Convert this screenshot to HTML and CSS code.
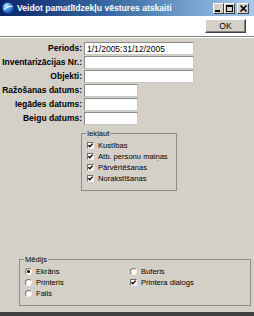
FILE: index.html
```html
<!DOCTYPE html>
<html lang="lv">
<head>
    <meta charset="UTF-8">
    <title>Veidot pamatlīdzekļu vēstures atskaiti</title>
    <link rel="stylesheet" href="styles.css">
</head>
<body>
    <div class="window">
        <!-- Title bar -->
        <div class="titlebar">
            <svg class="app-icon" width="12" height="12" viewBox="0 0 12 12">
                <defs>
                    <radialGradient id="globe" cx="0.35" cy="0.3" r="0.8">
                        <stop offset="0" stop-color="#cfe6ff"/>
                        <stop offset="0.5" stop-color="#3f8ee0"/>
                        <stop offset="1" stop-color="#0b3f9a"/>
                    </radialGradient>
                </defs>
                <circle cx="6" cy="6" r="5.5" fill="url(#globe)"/>
                <path d="M2 8 C4 5, 7 4, 10.5 4.5" stroke="#e8f4ff" stroke-width="1.2" fill="none"/>
            </svg>
            <span class="title">Veidot pamatlīdzekļu vēstures atskaiti</span>
            <div class="win-buttons">
                <span class="win-btn">
                    <svg width="9" height="9" viewBox="0 0 9 9"><rect x="1" y="6" width="5" height="2" fill="#000"/></svg>
                </span>
                <span class="win-btn">
                    <svg width="9" height="9" viewBox="0 0 9 9"><rect x="1.5" y="1.5" width="6" height="6" fill="none" stroke="#000"/><rect x="1" y="1" width="7" height="2" fill="#000"/></svg>
                </span>
                <span class="win-btn close">
                    <svg width="9" height="9" viewBox="0 0 9 9"><path d="M1.5 1.5 L7.5 7.5 M7.5 1.5 L1.5 7.5" stroke="#000" stroke-width="1.6"/></svg>
                </span>
            </div>
        </div>

        <!-- Toolbar -->
        <div class="toolbar">
            <button class="ok-button">OK</button>
        </div>

        <div class="content">
            <div class="fields">
                <label for="period">Periods:</label>
                <input type="text" id="period" class="long" value="1/1/2005:31/12/2005">

                <label for="inv_nr">Inventarizācijas Nr.:</label>
                <input type="text" id="inv_nr" class="long">

                <label for="objects">Objekti:</label>
                <input type="text" id="objects" class="long">

                <label for="made">Ražošanas datums:</label>
                <input type="text" id="made" class="short">

                <label for="bought">Iegādes datums:</label>
                <input type="text" id="bought" class="short">

                <label for="end">Beigu datums:</label>
                <input type="text" id="end" class="short">
            </div>

            <fieldset class="group include">
                <legend>Iekļaut</legend>
                <div class="option"><span class="check on"><svg width="5" height="5" viewBox="0 0 5 5"><path d="M0.3 2.2 L1.8 3.8 L4.7 0.6" stroke="#000" stroke-width="1.3" fill="none"/></svg></span>Kustības</div>
                <div class="option"><span class="check on"><svg width="5" height="5" viewBox="0 0 5 5"><path d="M0.3 2.2 L1.8 3.8 L4.7 0.6" stroke="#000" stroke-width="1.3" fill="none"/></svg></span>Atb. personu maiņas</div>
                <div class="option"><span class="check on"><svg width="5" height="5" viewBox="0 0 5 5"><path d="M0.3 2.2 L1.8 3.8 L4.7 0.6" stroke="#000" stroke-width="1.3" fill="none"/></svg></span>Pārvērtēšanas</div>
                <div class="option"><span class="check on"><svg width="5" height="5" viewBox="0 0 5 5"><path d="M0.3 2.2 L1.8 3.8 L4.7 0.6" stroke="#000" stroke-width="1.3" fill="none"/></svg></span>Norakstīšanas</div>
            </fieldset>

            <fieldset class="group media">
                <legend>Mēdijs</legend>
                <div class="option"><span class="radio on"></span>Ekrāns</div>
                <div class="option"><span class="radio"></span>Buferis</div>
                <div class="option"><span class="radio"></span>Printeris</div>
                <div class="option"><span class="check on"><svg width="5" height="5" viewBox="0 0 5 5"><path d="M0.3 2.2 L1.8 3.8 L4.7 0.6" stroke="#000" stroke-width="1.3" fill="none"/></svg></span>Printera dialogs</div>
                <div class="option"><span class="radio"></span>Fails</div>
            </fieldset>
        </div>
    </div>
</body>
</html>
```

FILE: styles.css
```css
body, html {
    margin: 0;
    padding: 0;
    background-color: #d4d0c8;
    font-family: "Liberation Sans", Arial, sans-serif;
}
.window {
    width: 254px;
    height: 316px;
    box-sizing: border-box;
    background-color: #d4d0c8;
    border-bottom: 4px solid #404040;
    display: flex;
    flex-direction: column;
    overflow: hidden;
}
.titlebar {
    height: 16px;
    flex: none;
    display: flex;
    align-items: center;
    padding: 0 5px 0 2px;
    background: linear-gradient(to right, #0a246a, #3a6ea5 45%, #a6caf0);
}
.app-icon {
    flex: none;
}
.title {
    margin-left: 3px;
    color: #fff;
    font-weight: bold;
    font-size: 8.6px;
    white-space: nowrap;
}
.win-buttons {
    margin-left: auto;
    display: flex;
}
.win-btn {
    width: 11px;
    height: 11px;
    box-sizing: border-box;
    display: flex;
    align-items: center;
    justify-content: center;
    background-color: #d4d0c8;
    border: 1px solid;
    border-color: #fff #404040 #404040 #fff;
}
.win-btn.close {
    margin-left: 2px;
    width: 12px;
}
.toolbar {
    height: 20px;
    flex: none;
    display: flex;
    align-items: center;
    justify-content: flex-end;
    padding-right: 8px;
    background-color: #fff;
    border-bottom: 1px solid #808080;
}
.ok-button {
    width: 41px;
    height: 14px;
    padding: 0;
    box-sizing: border-box;
    font-family: "Liberation Sans", Arial, sans-serif;
    font-size: 8.5px;
    color: #000;
    background-color: #d4d0c8;
    border: 1px solid;
    border-color: #fff #404040 #404040 #fff;
    box-shadow: inset -1px -1px 0 #808080;
}
.content {
    border-top: 1px solid #fff;
    padding-top: 4px;
}
.fields {
    display: grid;
    grid-template-columns: 82px auto;
    grid-auto-rows: 13px;
    column-gap: 2px;
    row-gap: 1px;
    justify-items: start;
}
.fields label {
    justify-self: end;
    font-size: 8.5px;
    font-weight: bold;
    line-height: 13px;
    white-space: nowrap;
    color: #000;
}
.fields input {
    height: 13px;
    box-sizing: border-box;
    padding: 0 2px;
    margin: 0;
    font-family: "Liberation Sans", Arial, sans-serif;
    font-size: 8.5px;
    color: #000;
    background-color: #fff;
    border: 1px solid;
    border-color: #8a8a8a #c8c8c8 #c8c8c8 #8a8a8a;
    outline: none;
}
.fields input.long {
    width: 110px;
}
.fields input.short {
    width: 54px;
}
.group {
    margin: 0;
    padding: 2px 5px 6px 5px;
    border: 1px solid #8c8c8c;
    font-size: 7.6px;
    color: #000;
}
.group legend {
    padding: 0 1px;
    margin-left: -1px;
    line-height: 9px;
}
.include {
    width: 96px;
    box-sizing: border-box;
    margin: 4px 0 0 81px;
}
.media {
    width: 232px;
    box-sizing: border-box;
    margin: 64px 0 0 19px;
    display: grid;
    grid-template-columns: 105px auto;
    padding-bottom: 6px;
}
.option {
    height: 11px;
    display: flex;
    align-items: center;
    gap: 4px;
    white-space: nowrap;
}
.check {
    width: 7px;
    height: 7px;
    box-sizing: border-box;
    flex: none;
    display: flex;
    align-items: center;
    justify-content: center;
    background-color: #fff;
    border: 1px solid;
    border-color: #707070 #f0f0f0 #f0f0f0 #707070;
}
.radio {
    width: 7px;
    height: 7px;
    box-sizing: border-box;
    flex: none;
    border-radius: 50%;
    background-color: #fff;
    border: 1px solid;
    border-color: #707070 #f0f0f0 #f0f0f0 #707070;
    display: flex;
    align-items: center;
    justify-content: center;
}
.radio.on::after {
    content: "";
    width: 3px;
    height: 3px;
    border-radius: 50%;
    background-color: #000;
}
```
